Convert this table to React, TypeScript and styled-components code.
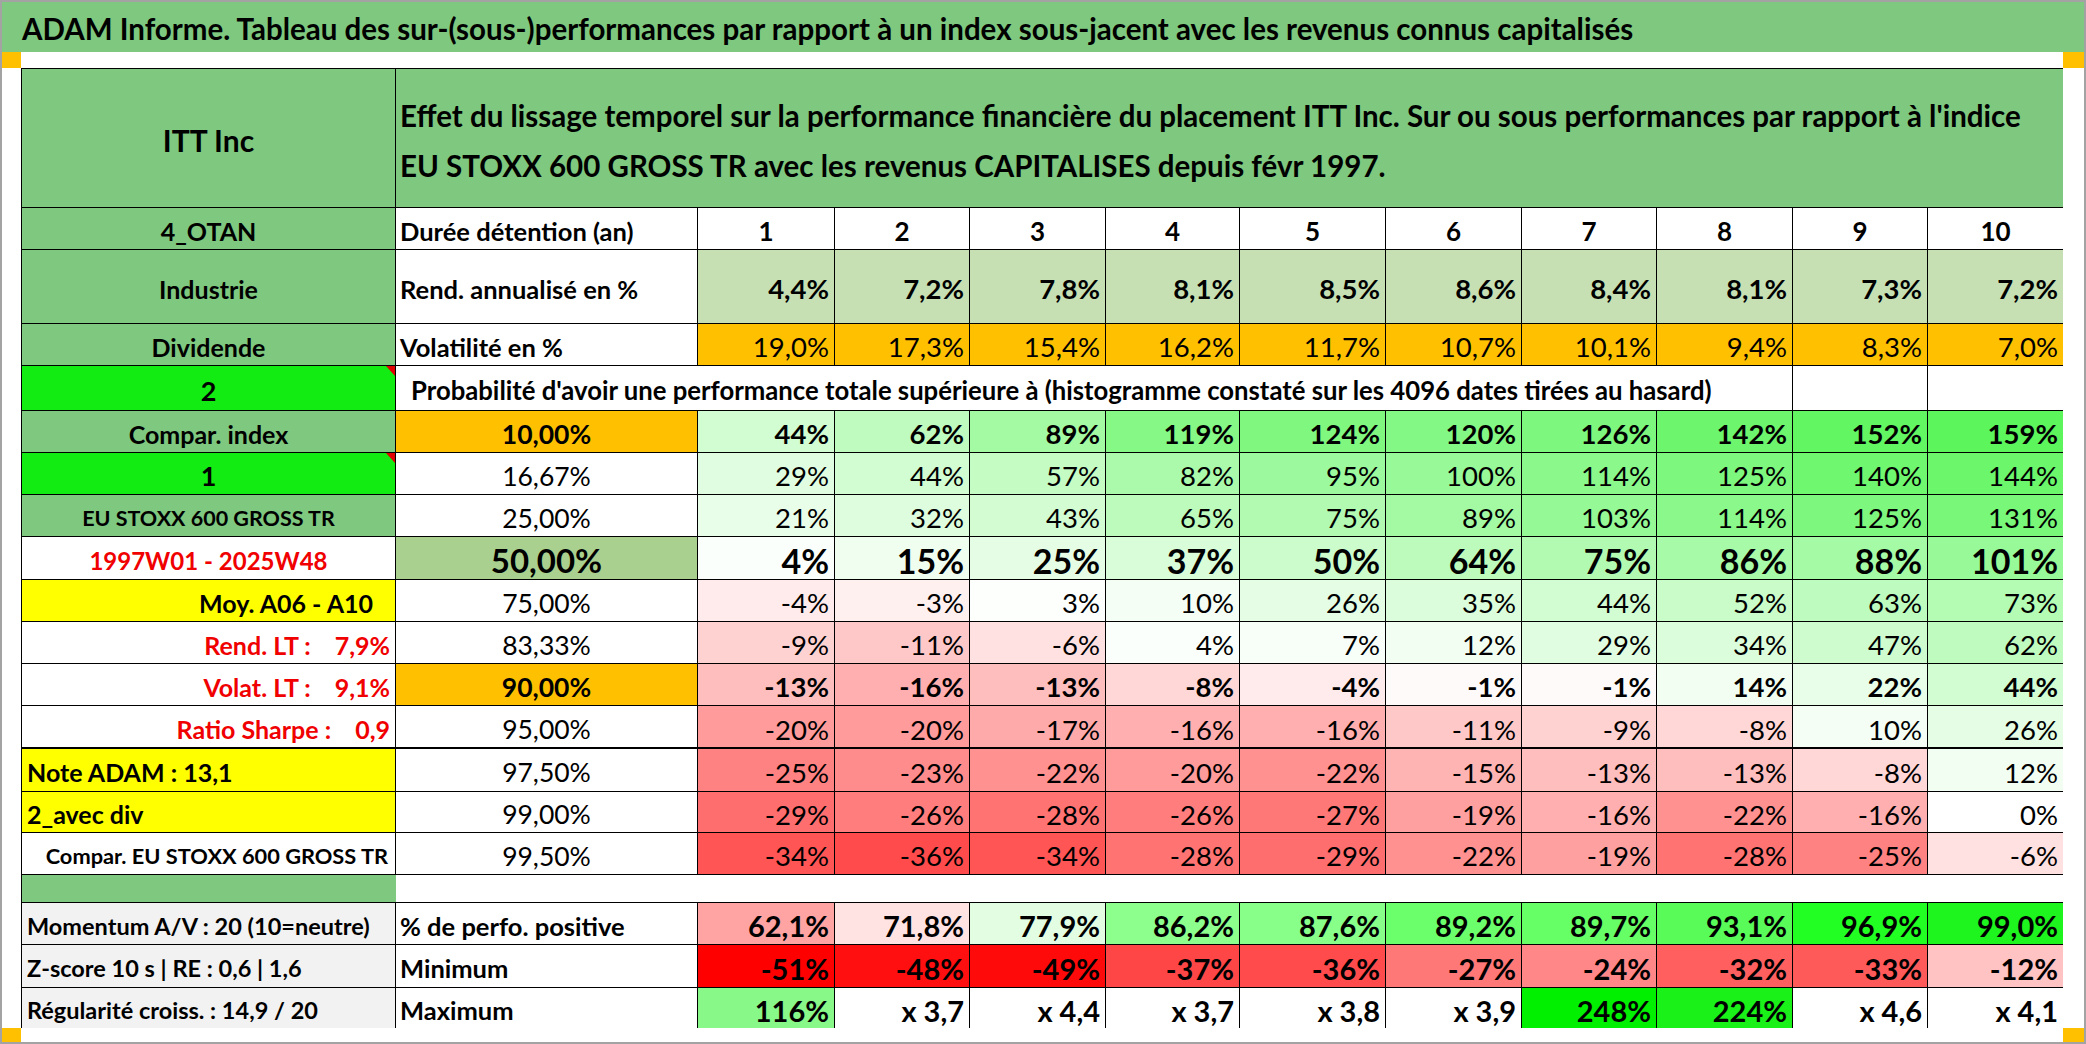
import React from 'react';
import styled, { createGlobalStyle, css } from 'styled-components';

const GREEN = '#7ec87f';
const BRIGHT = '#12ec12';
const ORANGE = '#ffc000';
const YELLOW = '#ffff00';
const RED = '#f00000';

const GlobalStyle = createGlobalStyle`
  html, body {
    margin: 0;
    padding: 0;
    background: #fff;
  }
  body {
    font-family: Lato, "Liberation Sans", Arial, sans-serif;
    color: #000;
  }
`;

// Excel-like 3-colour scale: -51% red, 0 white, 248% green
const heat = (v: number) => {
  if (v >= 0) {
    const t = Math.min(v / 248, 1);
    const rb = Math.round(255 * (1 - t));
    const g = Math.round(255 - 15 * t);
    return `rgb(${rb}, ${g}, ${rb})`;
  }
  const t = Math.min(-v / 51, 1);
  const gb = Math.round(255 * (1 - t));
  return `rgb(255, ${gb}, ${gb})`;
};

const durations = [1, 2, 3, 4, 5, 6, 7, 8, 9, 10];
const annualised = ['4,4%', '7,2%', '7,8%', '8,1%', '8,5%', '8,6%', '8,4%', '8,1%', '7,3%', '7,2%'];
const volatility = ['19,0%', '17,3%', '15,4%', '16,2%', '11,7%', '10,7%', '10,1%', '9,4%', '8,3%', '7,0%'];

type Side = {
  text: string;
  value?: string;
  bg?: string;
  color?: string;
  align?: 'left' | 'center' | 'right';
  size?: number;
  pr?: number;
  comment?: boolean;
};

type ProbRow = {
  side: Side;
  level: string;
  levelBg?: string;
  strong?: boolean;
  big?: boolean;
  thickTop?: boolean;
  values: number[];
};

const probRows: ProbRow[] = [
  { side: { text: 'Compar. index', bg: GREEN }, level: '10,00%', levelBg: ORANGE, strong: true, values: [44, 62, 89, 119, 124, 120, 126, 142, 152, 159] },
  { side: { text: '1', bg: BRIGHT, size: 27, comment: true }, level: '16,67%', values: [29, 44, 57, 82, 95, 100, 114, 125, 140, 144] },
  { side: { text: 'EU STOXX 600 GROSS TR', bg: GREEN, size: 21.5 }, level: '25,00%', values: [21, 32, 43, 65, 75, 89, 103, 114, 125, 131] },
  { side: { text: '1997W01 - 2025W48', color: RED, size: 24 }, level: '50,00%', levelBg: '#a9d08e', strong: true, big: true, values: [4, 15, 25, 37, 50, 64, 75, 86, 88, 101] },
  { side: { text: 'Moy. A06 - A10', bg: YELLOW, align: 'right', pr: 22 }, level: '75,00%', values: [-4, -3, 3, 10, 26, 35, 44, 52, 63, 73] },
  { side: { text: 'Rend. LT :', value: '7,9%', color: RED, align: 'right' }, level: '83,33%', values: [-9, -11, -6, 4, 7, 12, 29, 34, 47, 62] },
  { side: { text: 'Volat. LT :', value: '9,1%', color: RED, align: 'right' }, level: '90,00%', levelBg: ORANGE, strong: true, values: [-13, -16, -13, -8, -4, -1, -1, 14, 22, 44] },
  { side: { text: 'Ratio Sharpe :', value: '0,9', color: RED, align: 'right' }, level: '95,00%', values: [-20, -20, -17, -16, -16, -11, -9, -8, 10, 26] },
  { side: { text: 'Note ADAM : 13,1', bg: YELLOW, align: 'left' }, level: '97,50%', thickTop: true, values: [-25, -23, -22, -20, -22, -15, -13, -13, -8, 12] },
  { side: { text: '2_avec div', bg: YELLOW, align: 'left' }, level: '99,00%', values: [-29, -26, -28, -26, -27, -19, -16, -22, -16, 0] },
  { side: { text: 'Compar. EU STOXX 600 GROSS TR', align: 'right', size: 21.8, pr: 7 }, level: '99,50%', values: [-34, -36, -34, -28, -29, -22, -19, -28, -25, -6] },
];

const positive = [
  ['62,1%', '#ffa3a3'], ['71,8%', '#ffe2e2'], ['77,9%', '#e2fde2'], ['86,2%', '#8cff8c'], ['87,6%', '#88ff88'],
  ['89,2%', '#6bff6b'], ['89,7%', '#66ff66'], ['93,1%', '#58fb58'], ['96,9%', '#22ff22'], ['99,0%', '#1ef41e'],
];
const minimum = [-51, -48, -49, -37, -36, -27, -24, -32, -33, -12];
const maximum: [string, number | null][] = [
  ['116%', 116], ['x 3,7', null], ['x 4,4', null], ['x 3,7', null], ['x 3,8', null],
  ['x 3,9', null], ['248%', 248], ['224%', 224], ['x 4,6', null], ['x 4,1', null],
];

const App = () => {
  return (
    <>
      <GlobalStyle />
      <Frame>
        <TitleBar>
          ADAM Informe. Tableau des sur-(sous-)performances par rapport à un index sous-jacent avec les revenus connus capitalisés
        </TitleBar>
        <Handle />
        <Blank />
        <Handle />
        <Blank />
        <Sheet>
          <SideCell $bg={GREEN} $size={30}>ITT Inc</SideCell>
          <Banner>
            Effet du lissage temporel sur la performance financière du placement ITT Inc. Sur ou sous performances par rapport à l'indice
            <br />
            EU STOXX 600 GROSS TR avec les revenus CAPITALISES depuis févr 1997.
          </Banner>

          <SideCell $bg={GREEN}>4_OTAN</SideCell>
          <RowLabel>Durée détention (an)</RowLabel>
          {durations.map(d => (
            <NumCell key={d} $align="center" $bold $size={26}>{d}</NumCell>
          ))}

          <SideCell $bg={GREEN}>Industrie</SideCell>
          <RowLabel>Rend. annualisé en %</RowLabel>
          {annualised.map((v, i) => (
            <NumCell key={i} $bg="#c6e0b4" $bold>{v}</NumCell>
          ))}

          <SideCell $bg={GREEN}>Dividende</SideCell>
          <RowLabel>Volatilité en %</RowLabel>
          {volatility.map((v, i) => (
            <NumCell key={i} $bg={ORANGE}>{v}</NumCell>
          ))}

          <SideCell $bg={BRIGHT} $size={27}>
            2
            <Comment />
          </SideCell>
          <ProbTitle>
            Probabilité d'avoir une performance totale supérieure à (histogramme constaté sur les 4096 dates tirées au hasard)
          </ProbTitle>
          <NumCell />
          <NumCell />

          {probRows.map((row, r) => (
            <React.Fragment key={r}>
              <SideCell
                $bg={row.side.bg}
                $color={row.side.color}
                $align={row.side.align}
                $size={row.side.size}
                $pr={row.side.pr}
                $thickTop={row.thickTop}
              >
                {row.side.text}
                {row.side.value && <SideValue>{row.side.value}</SideValue>}
                {row.side.comment && <Comment />}
              </SideCell>
              <LevelCell $bg={row.levelBg} $bold={row.strong} $big={row.big} $thickTop={row.thickTop}>
                {row.level}
              </LevelCell>
              {row.values.map((v, i) => (
                <NumCell key={i} $bg={heat(v)} $bold={row.strong} $big={row.big} $thickTop={row.thickTop}>
                  {v}%
                </NumCell>
              ))}
            </React.Fragment>
          ))}

          <SideCell $bg={GREEN} $bleed />
          <Gap />

          <StatLabel>Momentum A/V : 20 (10=neutre)</StatLabel>
          <RowLabel>% de perfo. positive</RowLabel>
          {positive.map(([v, bg]) => (
            <NumCell key={v} $bg={bg} $bold $size={29}>{v}</NumCell>
          ))}

          <StatLabel>Z-score 10 s | RE : 0,6 | 1,6</StatLabel>
          <RowLabel>Minimum</RowLabel>
          {minimum.map(v => (
            <NumCell key={v} $bg={heat(v)} $bold $size={29}>{v}%</NumCell>
          ))}

          <StatLabel>Régularité croiss. : 14,9 / 20</StatLabel>
          <RowLabel>Maximum</RowLabel>
          {maximum.map(([v, n], i) => (
            <NumCell key={i} $bg={n === null ? '#fff' : heat(n)} $bold $size={29}>{v}</NumCell>
          ))}
        </Sheet>
        <Blank />
        <Handle />
        <Blank />
        <Handle />
      </Frame>
    </>
  );
};

const Frame = styled.div`
  box-sizing: border-box;
  width: 2086px;
  height: 1044px;
  display: grid;
  grid-template-columns: 19px 2042px 21px;
  grid-template-rows: 50px 16px 960px 14px;
  border: 2px solid #a3a3a3;
  background: #fff;
  overflow: hidden;
`;

const TitleBar = styled.div`
  grid-column: 1 / -1;
  display: flex;
  align-items: center;
  padding: 2px 0 0 20px;
  background: ${GREEN};
  font-size: 29.5px;
  font-weight: 700;
  white-space: nowrap;
`;

const Handle = styled.div`
  background: ${ORANGE};
`;

const Blank = styled.div`
  background: #fff;
`;

const Sheet = styled.div`
  display: grid;
  grid-template-columns: 373px 301px 136px 134px 135px 133px 145px 135px 134px 135px 134px 135px;
  grid-template-rows: 138px 41px 73px 41px 44px 41px 41px 41px 42px 41px 41px 41px 42px 42px 40px 41px 27px 41px 42px 40px;
  gap: 1px;
  border: 1px solid #000;
  background: #000;
  align-self: start;
`;

type CellProps = {
  $bg?: string;
  $color?: string;
  $align?: 'left' | 'center' | 'right';
  $size?: number;
  $bold?: boolean;
  $big?: boolean;
  $pr?: number;
  $thickTop?: boolean;
  $bleed?: boolean;
};

const Cell = styled.div<CellProps>`
  position: relative;
  box-sizing: border-box;
  display: flex;
  align-items: center;
  justify-content: ${p => (p.$align === 'left' ? 'flex-start' : p.$align === 'right' ? 'flex-end' : 'center')};
  padding: 4px ${p => p.$pr ?? 5}px 0 5px;
  background: ${p => p.$bg ?? '#fff'};
  color: ${p => p.$color ?? '#000'};
  font-size: ${p => p.$size ?? 25.5}px;
  white-space: pre;
  ${p => p.$thickTop && css`box-shadow: 0 -2px 0 #000;`}
  ${p => p.$bleed && css`margin-right: -1px;`}
`;

const SideCell = styled(Cell)`
  font-size: ${p => p.$size ?? 25}px;
  font-weight: 700;
`;

const StatLabel = styled(Cell).attrs({ $align: 'left' as const })`
  background: #f2f2f2;
  font-size: 23.5px;
  font-weight: 700;
`;

const SideValue = styled.span`
  margin-left: 24px;
`;

const Comment = styled.span`
  position: absolute;
  top: 0;
  right: 0;
  width: 0;
  height: 0;
  border-top: 10px solid #e00000;
  border-left: 9px solid transparent;
`;

const Banner = styled.div`
  grid-column: span 11;
  display: flex;
  flex-direction: column;
  justify-content: center;
  padding: 6px 0 0 4px;
  background: ${GREEN};
  font-size: 29.5px;
  font-weight: 700;
  line-height: 50px;
  white-space: nowrap;
`;

const RowLabel = styled(Cell).attrs({ $align: 'left' as const })`
  padding-left: 4px;
  font-weight: 700;
`;

const ProbTitle = styled(Cell).attrs({ $align: 'left' as const })`
  grid-column: span 9;
  padding-left: 15px;
  font-size: 25.7px;
  font-weight: 700;
`;

const LevelCell = styled(Cell)<{ $bold?: boolean; $big?: boolean }>`
  font-weight: ${p => (p.$bold ? 700 : 400)};
  font-size: ${p => (p.$big ? 33 : 26.5)}px;
`;

const NumCell = styled(Cell).attrs<CellProps>(p => ({ $align: p.$align ?? 'right' }))`
  font-weight: ${p => (p.$bold ? 700 : 400)};
  font-size: ${p => p.$size ?? (p.$big ? 34 : 27.5)}px;
`;

const Gap = styled.div`
  grid-column: span 11;
  background: #fff;
`;

export default App;
